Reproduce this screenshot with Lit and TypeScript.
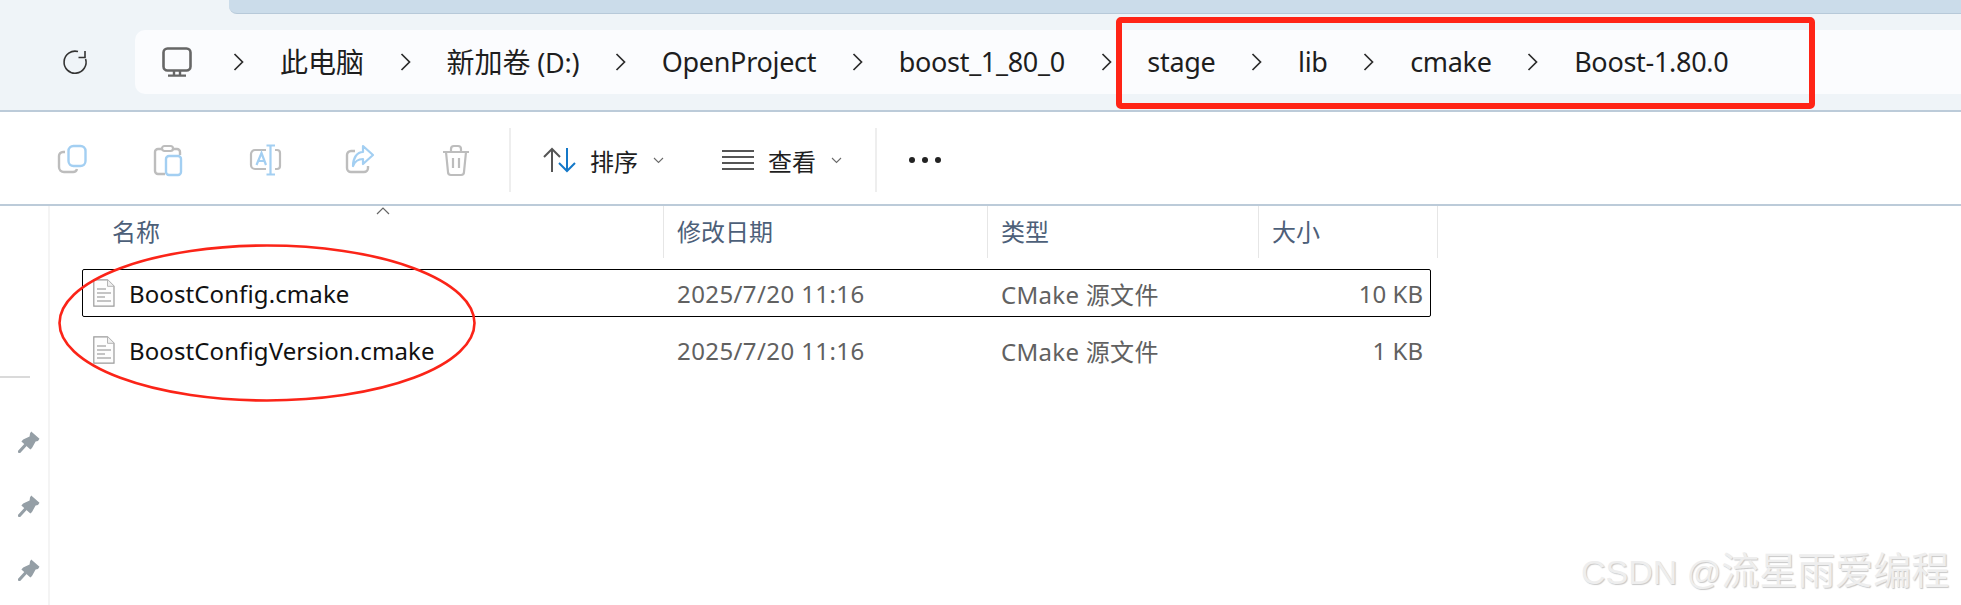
import { LitElement, html, css, svg } from "lit";
import { customElement } from "lit/decorators.js";

const crumbs = [
  html`<span class="cjk">此电脑</span>`,
  html`<span class="cjk">新加卷</span> (D:)`,
  "OpenProject", "boost_1_80_0", "stage", "lib", "cmake", "Boost-1.80.0",
];
const files = [
  { name: "BoostConfig.cmake", date: "2025/7/20 11:16", type: "CMake 源文件", size: "10 KB", sel: true },
  { name: "BoostConfigVersion.cmake", date: "2025/7/20 11:16", type: "CMake 源文件", size: "1 KB", sel: false },
];

const G = "#bdbdbd";
const B = "#a3cff2";

const chevron = html`<svg class="chev" width="11" height="20" viewBox="0 0 11 20"><path d="M1.5 2 L9.5 10 L1.5 18" fill="none" stroke="#2b2b2b" stroke-width="1.7"/></svg>`;
const down = html`<svg class="down" width="11" height="7" viewBox="0 0 11 7"><path d="M1 1 L5.5 5.5 L10 1" fill="none" stroke="#6a6a6a" stroke-width="1.1"/></svg>`;
const pin = html`<svg class="pin" width="22" height="22" viewBox="0 0 22 22"><path d="M1.5 20.5 L7 14.5" stroke="#959fa6" stroke-width="3.2" stroke-linecap="round"/><path d="M13.2 0.5 L21.5 7.8 L20 10 L17.6 10.4 L14 17 L12.4 18.6 L3.4 10.6 L5.2 8.6 L11.6 5.6 L12 2.4 Z" fill="#959fa6"/></svg>`;
const fileIcon = html`<svg class="file" width="22" height="28" viewBox="0 0 22 28"><path d="M0.8 0.8 H14.5 L21 7.3 V27.2 H0.8 Z" fill="#fdfdfd" stroke="#9b9b9b" stroke-width="1.2"/><path d="M14.5 0.8 V7.3 H21" fill="#efefef" stroke="#b5b5b5" stroke-width="1"/><path d="M4 10 H13 M4 14 H18 M4 18 H12 M4 22 H18" stroke="#c4c4c4" stroke-width="2"/></svg>`;

const tools = [
  svg`<path d="M8 8 H6 a4 4 0 0 0 -4 4 V23 a5 5 0 0 0 5 5 H16 a4 4 0 0 0 4 -3" stroke="${G}" fill="none" stroke-width="2.4"/><rect x="11.5" y="2" width="17" height="20" rx="5" stroke="${B}" fill="none" stroke-width="2.4"/>`,
  svg`<path d="M9 5 H5 a3 3 0 0 0 -3 3 V27 a3 3 0 0 0 3 3 H12 M20 5 H24 a3 3 0 0 1 3 3 V11" stroke="${G}" fill="none" stroke-width="2.4"/><rect x="9" y="2" width="11" height="5" rx="2.5" stroke="${G}" fill="none" stroke-width="2.2"/><rect x="13" y="12" width="15" height="19" rx="3" stroke="${B}" fill="none" stroke-width="2.4"/>`,
  svg`<path d="M17 6 H6 a4 4 0 0 0 -4 4 V21 a4 4 0 0 0 4 4 H17 M26 6 H28 a3 3 0 0 1 3 3 V22 a3 3 0 0 1 -3 3 H26" stroke="${G}" fill="none" stroke-width="2.2"/><path d="M7.5 21 L12.5 9 L17 21 M9 17 H16 M21.5 2 V30 M17.5 1.5 H26 M17.5 30.5 H26" stroke="${B}" fill="none" stroke-width="2.2"/>`,
  svg`<path d="M10 7 H6 a4 4 0 0 0 -4 4 V24 a4 4 0 0 0 4 4 H19 a4 4 0 0 0 4 -4 V22" stroke="${G}" fill="none" stroke-width="2.4"/><path d="M18 2 L28 11 L18 20 V15 C13 15 10 17 8 22 C8 14 12 8 18 8 Z" stroke="${B}" fill="none" stroke-width="2.2" stroke-linejoin="round"/>`,
  svg`<path d="M2 8 H28 M10 8 V5 a3 3 0 0 1 3 -3 H17 a3 3 0 0 1 3 3 V8 M5 8 L7 28 a3 3 0 0 0 3 3 H20 a3 3 0 0 0 3 -3 L25 8 M12 14 V24 M18 14 V24" stroke="${G}" fill="none" stroke-width="2.2"/>`,
];

@customElement("app-root")
export class AppRoot extends LitElement {
  static styles = css`
    :host { display: block; position: relative; width: 1961px; height: 605px; overflow: hidden; background: #fff;
      font-family: "Noto Sans", "Noto Sans CJK SC", sans-serif; }
    .top { height: 110px; background: #eff4f8; border-bottom: 2px solid #bccbd9; display: flex; flex-direction: column; }
    .tabstrip { height: 14px; padding-left: 229px; margin-bottom: 16px; flex: none; }
    .tab { height: 13px; background: #cbdcea; border-bottom: 1px solid #b7c9d9; border-bottom-left-radius: 8px; }
    .navrow { display: flex; align-items: center; height: 64px; }
    .refresh { width: 135px; display: flex; justify-content: center; padding-left: 15px; box-sizing: border-box; }
    .addr { flex: 1; height: 64px; background: #fbfcfe; border-radius: 10px 0 0 10px; display: flex; align-items: center; gap: 35.75px; padding-left: 27px; font-size: 27px; letter-spacing: -0.3px; color: #1e1e1e; white-space: nowrap; }
    .addr .pc { margin-right: 5.5px; }
    .addr .item { line-height: 64px; }
    .addr .cjk { font-size: 28px; letter-spacing: 0; }
    .bar { height: 88px; padding-top: 4px; display: flex; align-items: center; padding-left: 25px; border-bottom: 2px solid #bccbd9; }
    .tool { width: 96px; display: flex; justify-content: center; }
    .sep { width: 2px; height: 64px; background: #eeeeee; }
    .sep.a { margin-left: 4px; margin-right: 32px; }
    .sep.b { margin-left: 33px; margin-right: 32px; }
    .cmd { display: flex; align-items: center; font-size: 24px; color: #1f1f1f; }
    .cmd .ic { margin-right: 14px; }
    .cmd .down { margin-left: 15px; }
    .cmd.sort { margin-right: 58px; }
    .dots { display: flex; gap: 7px; }
    .dots i { width: 6px; height: 6px; border-radius: 50%; background: #222; display: block; }
    .body { display: flex; height: 399px; }
    .side { width: 48px; flex: none; border-right: 2px solid #f4f4f4; padding-top: 170px; display: flex; flex-direction: column; }
    .side .rule { width: 30px; height: 2px; background: #dadada; margin-bottom: 53px; }
    .side .pins { display: flex; flex-direction: column; gap: 42px; padding-left: 18px; }
    .pin { display: block; }
    .main { flex: 1; position: relative; }
    .caret { position: absolute; left: 326px; top: 1px; }
    .cols { display: grid; grid-template-columns: 614px 324px 271px 179px; height: 51px; width: 1388px; }
    .cols div { border-right: 1.5px solid #e6e6e6; font-size: 24px; color: #4d6079; padding-left: 13px; line-height: 52px; box-sizing: border-box; }
    .cols div:first-child { padding-left: 62px; }
    .rows { margin-top: 12px; display: flex; flex-direction: column; }
    .row { display: grid; grid-template-columns: 582px 324px 271px 1fr; height: 48px; width: 1349px; margin-left: 32px; box-sizing: border-box; border: 1px solid transparent; align-items: center; font-size: 24px; color: #616161; }
    .row.sel { border: 1px solid #000; border-radius: 2px; margin-bottom: 9px; }
    .row .nm { display: flex; align-items: center; gap: 14px; padding-left: 10px; color: #111; letter-spacing: 0.1px; }
    .row .sz { text-align: right; padding-right: 7px; }
    .row .dt { padding-left: 12px; letter-spacing: 0.4px; }
    .row .ty { padding-left: 12px; letter-spacing: 0.3px; }
    .redbox { position: absolute; left: 1116px; top: 17px; width: 699px; height: 92px; box-sizing: border-box; border: 6px solid #ff2416; border-radius: 5px; pointer-events: none; }
    .oval { position: absolute; left: 55px; top: 240px; pointer-events: none; }
    .mark { position: absolute; left: 1581px; top: 544px; font-family: "Liberation Sans", "Noto Sans CJK SC", sans-serif; font-size: 38px; line-height: 54px; color: #eeeeee; text-shadow: 1px 1px 1px #c8c8c8; white-space: nowrap; }
    .mark .lat { font-size: 34px; }
  `;

  render() {
    return html`
      <div class="top">
        <div class="tabstrip"><div class="tab"></div></div>
        <div class="navrow">
          <div class="refresh">
            <svg width="26" height="26" viewBox="0 0 26 26"><path d="M16 2.6 A11 11 0 1 0 23.6 10" fill="none" stroke="#333" stroke-width="1.6"/><path d="M23 2 V8.5 H16.5" fill="none" stroke="#333" stroke-width="1.6"/></svg>
          </div>
          <div class="addr">
            <svg class="pc" width="30" height="30" viewBox="0 0 30 30"><rect x="1.5" y="1.5" width="27" height="22" rx="4" fill="none" stroke="#666" stroke-width="2.6"/><path d="M12 24 V28 M18 24 V28 M6 28.6 H24" stroke="#666" stroke-width="2.4" fill="none"/></svg>
            ${crumbs.map((c) => html`${chevron}<span class="item">${c}</span>`)}
          </div>
        </div>
      </div>
      <div class="bar">
        ${tools.map((t) => html`<div class="tool"><svg width="33" height="33" viewBox="0 0 33 33">${t}</svg></div>`)}
        <div class="sep a"></div>
        <div class="cmd sort">
          <svg class="ic" width="33" height="26" viewBox="0 0 33 26"><path d="M9 25 V2 M1 10 L9 2 L17 10" fill="none" stroke="#555" stroke-width="2"/><path d="M24 1 V24 M16 16 L24 24 L32 16" fill="none" stroke="#1478c8" stroke-width="2"/></svg>
          <span>排序</span>${down}
        </div>
        <div class="cmd">
          <svg class="ic" width="32" height="22" viewBox="0 0 32 22"><path d="M0 2 H32 M0 8 H32 M0 14 H32 M0 20 H32" stroke="#555" stroke-width="2"/></svg>
          <span>查看</span>${down}
        </div>
        <div class="sep b"></div>
        <div class="dots"><i></i><i></i><i></i></div>
      </div>
      <div class="body">
        <div class="side">
          <div class="rule"></div>
          <div class="pins">${pin}${pin}${pin}</div>
        </div>
        <div class="main">
          <svg class="caret" width="14" height="8" viewBox="0 0 14 8"><path d="M1 7 L7 1 L13 7" fill="none" stroke="#666" stroke-width="1.2"/></svg>
          <div class="cols"><div>名称</div><div>修改日期</div><div>类型</div><div>大小</div></div>
          <div class="rows">
            ${files.map((f) => html`<div class="row ${f.sel ? "sel" : ""}">
              <div class="nm">${fileIcon}<span>${f.name}</span></div>
              <div class="dt">${f.date}</div><div class="ty">${f.type}</div><div class="sz">${f.size}</div>
            </div>`)}
          </div>
        </div>
      </div>
      <div class="redbox"></div>
      <svg class="oval" width="424" height="166" viewBox="0 0 424 166"><ellipse cx="212" cy="83" rx="207.5" ry="77.5" fill="none" stroke="#fb2418" stroke-width="2.6"/></svg>
      <div class="mark"><span class="lat">CSDN @</span>流星雨爱编程</div>
    `;
  }
}
